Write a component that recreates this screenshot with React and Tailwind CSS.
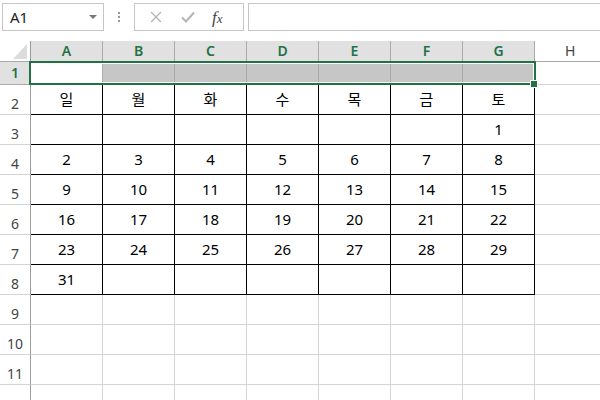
import React from "react";

const cols = ["A", "B", "C", "D", "E", "F", "G"];
const days = ["일", "월", "화", "수", "목", "금", "토"];
const weeks = [
  ["", "", "", "", "", "", "1"],
  ["2", "3", "4", "5", "6", "7", "8"],
  ["9", "10", "11", "12", "13", "14", "15"],
  ["16", "17", "18", "19", "20", "21", "22"],
  ["23", "24", "25", "26", "27", "28", "29"],
  ["31", "", "", "", "", "", ""],
];

const font = { fontFamily: '"Noto Sans", "Noto Sans CJK KR", sans-serif' };

function RowHead({ n, active }) {
  return (
    <div
      className={
        "w-[31px] shrink-0 flex justify-center border-r border-b text-[14px] leading-none border-r-[#9b9b9b] " +
        (active
          ? "bg-[#e1e1e1] text-[#217346] font-semibold border-b-[#ababab] items-center"
          : "bg-white text-[#444] border-b-[#d4d4d4] items-end pb-[3px]")
      }
    >
      {n}
    </div>
  );
}

function Cell({ text, table }) {
  return (
    <div
      className={
        "w-[72px] shrink-0 flex items-center justify-center border-r border-b text-[15px] leading-none text-black " +
        (table ? "border-black" : "border-[#d4d4d4]")
      }
    >
      {text}
    </div>
  );
}

export default function App() {
  const rows = [];
  rows.push({ n: 2, cells: days, table: true });
  weeks.forEach((w, i) => rows.push({ n: 3 + i, cells: w, table: true }));
  for (let n = 9; n <= 12; n++) rows.push({ n, cells: ["", "", "", "", "", "", ""], table: false });

  return (
    <div className="w-[600px] h-[400px] overflow-hidden bg-white relative" style={font}>
      {/* formula bar */}
      <div className="h-[41px] flex items-start pt-[3px] pl-[2px]">
        <div className="w-[102px] h-[28px] border border-[#c6c6c6] flex items-center justify-between pl-[7px] pr-[6px]">
          <span className="text-[15px] text-[#222] leading-none">A1</span>
          <span className="w-0 h-0 border-l-[4px] border-r-[4px] border-t-[4px] border-l-transparent border-r-transparent border-t-[#777] mb-[1px]" />
        </div>
        <div className="w-[30px] h-[28px] flex flex-col items-center justify-center gap-[2px]">
          <span className="w-[2px] h-[2px] bg-[#999]" />
          <span className="w-[2px] h-[2px] bg-[#999]" />
          <span className="w-[2px] h-[2px] bg-[#999]" />
        </div>
        <div className="w-[110px] h-[28px] border border-[#c6c6c6] flex items-center">
          <svg width="12" height="12" viewBox="0 0 12 12" className="ml-[15px]">
            <path d="M1 1 L11 11 M11 1 L1 11" stroke="#b4b4b4" strokeWidth="1.3" />
          </svg>
          <svg width="14" height="12" viewBox="0 0 14 12" className="ml-[19px]">
            <path d="M1 6.5 L5 10.5 L13 1.5" stroke="#b4b4b4" strokeWidth="2" fill="none" />
          </svg>
          <span
            className="ml-[17px] text-[17px] italic text-[#444] leading-none"
            style={{ fontFamily: '"Liberation Serif", serif' }}
          >
            f<span className="text-[13px]">x</span>
          </span>
        </div>
        <div className="ml-[4px] flex-1 h-[28px] border border-[#c6c6c6] border-r-0" />
      </div>

      {/* column headers */}
      <div className="flex h-[21px]">
        <div className="w-[31px] shrink-0 border-r border-b border-r-[#9b9b9b] border-b-[#ababab] bg-white flex items-end justify-end pr-[3px] pb-[2px]">
          <svg width="14" height="15" viewBox="0 0 14 15" className="block">
            <path d="M14 0 L14 15 L0 15 Z" fill="#dcdcdc" />
          </svg>
        </div>
        {cols.map((c) => (
          <div
            key={c}
            className="w-[72px] shrink-0 bg-[#e1e1e1] border-r border-b border-[#ababab] flex items-center justify-center text-[14px] font-semibold text-[#217346] leading-none"
          >
            {c}
          </div>
        ))}
        <div className="flex-1 border-b border-[#ababab] flex items-center pl-[30px] text-[14px] text-[#444] leading-none">
          H
        </div>
      </div>

      {/* row 1 */}
      <div className="flex h-[23px]">
        <RowHead n={1} active />
        {cols.map((c, i) => (
          <div
            key={c}
            className={
              "w-[72px] shrink-0 border-r border-b border-b-black border-r-[#ababab] " +
              (i === 0 ? "bg-white" : "bg-[#c6c6c6]")
            }
          />
        ))}
        <div className="flex-1 border-b border-[#d4d4d4]" />
      </div>

      {/* body rows */}
      {rows.map((r) => (
        <div key={r.n} className="flex h-[30px]">
          <RowHead n={r.n < 12 ? r.n : ""} />
          {r.cells.map((t, i) => (
            <Cell key={i} text={t} table={r.table} />
          ))}
          <div className="flex-1 border-b border-[#d4d4d4]" />
        </div>
      ))}

      {/* selection A1:G1 */}
      <div className="absolute left-[29px] top-[61px] w-[507px] h-[24px] border-2 border-[#217346] pointer-events-none">
        <div className="w-full h-full border border-white" />
      </div>
      <div className="absolute left-[531px] top-[81px] w-[6px] h-[6px] bg-[#217346] outline outline-1 outline-white" />
    </div>
  );
}
